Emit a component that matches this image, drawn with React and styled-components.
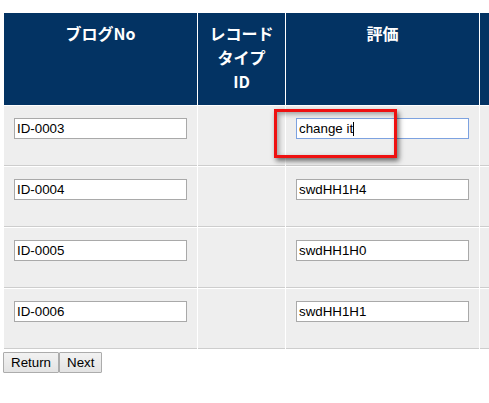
import React from "react";
import styled, { createGlobalStyle } from "styled-components";

// --- ESTILOS ---
const GlobalStyle = createGlobalStyle`
  html, body {
    margin: 0;
    padding: 0;
    background: #ffffff;
    overflow: hidden;
  }
`;

const Page = styled.div`
  padding-top: 13px;
  width: 489px;
  overflow: hidden;
`;

const Table = styled.div`
  display: grid;
  grid-template-columns: 193px 87px 193px 60px;
  gap: 1px;
  margin-left: 4px;
  width: 540px;
  background: #ffffff;
`;

const HeadCell = styled.div`
  box-sizing: border-box;
  height: 92px;
  padding-top: 8px;
  background: #033363;
  color: #ffffff;
  font-family: "Noto Sans CJK JP", "Noto Sans", sans-serif;
  font-weight: bold;
  font-size: 16px;
  line-height: 24px;
  text-align: center;
`;

const Cell = styled.div`
  position: relative;
  box-sizing: border-box;
  height: 60px;
  padding: 12px 10px 0;
  background: #eeeeee;
  border-bottom: 1px solid #cdcdcd;
`;

const FieldWrap = styled.span`
  position: relative;
  display: inline-block;
`;

const Field = styled.input`
  box-sizing: border-box;
  width: 173px;
  height: 21px;
  margin: 0;
  padding: 1px 2px;
  border: 1px solid ${(p) => (p.$focused ? "#7da2e0" : "#a9a9a9")};
  background: #ffffff;
  color: #000000;
  font-family: "Liberation Sans", Arial, sans-serif;
  font-size: 13.33px;
  outline: none;
`;

const Caret = styled.span`
  position: absolute;
  top: 4px;
  left: 57px;
  width: 1px;
  height: 14px;
  background: #000000;
`;

const Highlight = styled.div`
  position: absolute;
  left: -12px;
  top: 3px;
  width: 123px;
  height: 49px;
  box-sizing: border-box;
  border: 3px solid #ee1111;
  box-shadow: 2px 3px 5px rgba(0, 0, 0, 0.55), inset 2px 2px 5px rgba(0, 0, 0, 0.35);
  pointer-events: none;
`;

const ButtonBar = styled.div`
  display: flex;
  margin: 3px 0 0 3px;
`;

const Button = styled.button`
  box-sizing: border-box;
  height: 21px;
  margin: 0;
  padding: 0 7px;
  border: 1px solid #acacac;
  border-radius: 1px;
  background: linear-gradient(#f2f2f2, #e3e3e3);
  color: #000000;
  font-family: "Liberation Sans", Arial, sans-serif;
  font-size: 13.33px;
  line-height: 19px;
`;

// --- DATOS ---
const filas = [
  { blog: "ID-0003", hyouka: "change it", foco: true },
  { blog: "ID-0004", hyouka: "swdHH1H4" },
  { blog: "ID-0005", hyouka: "swdHH1H0" },
  { blog: "ID-0006", hyouka: "swdHH1H1" },
];

// --- COMPONENTE ---
const App = () => {
  return (
    <Page>
      <GlobalStyle />
      <Table>
        <HeadCell>ブログNo</HeadCell>
        <HeadCell>
          レコード
          <br />
          タイプ
          <br />
          ID
        </HeadCell>
        <HeadCell>評価</HeadCell>
        <HeadCell />

        {filas.map((f) => (
          <React.Fragment key={f.blog}>
            <Cell>
              <Field defaultValue={f.blog} />
            </Cell>
            <Cell />
            <Cell>
              <FieldWrap>
                <Field defaultValue={f.hyouka} $focused={f.foco} />
                {f.foco && <Caret />}
              </FieldWrap>
              {f.foco && <Highlight />}
            </Cell>
            <Cell />
          </React.Fragment>
        ))}
      </Table>
      <ButtonBar>
        <Button>Return</Button>
        <Button>Next</Button>
      </ButtonBar>
    </Page>
  );
};

export default App;
